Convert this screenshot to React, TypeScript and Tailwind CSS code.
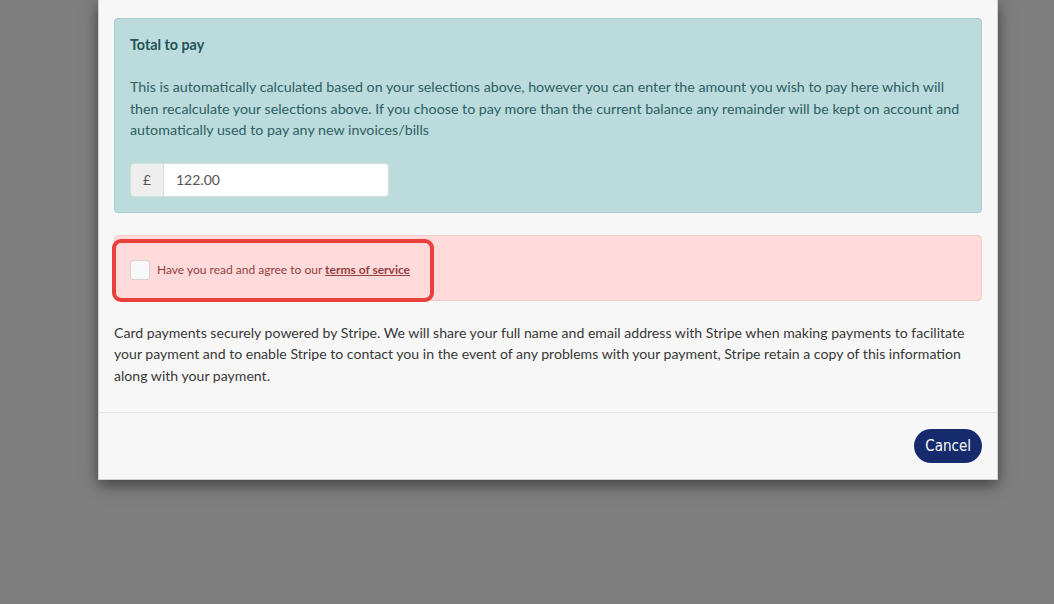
export default function App() {
  const font = { fontFamily: '"Lato", "Open Sans", sans-serif' };
  return (
    <div className="w-full h-[604px] bg-[#7f7f7f] overflow-hidden" style={font}>
      <div className="ml-[98px] w-[900px] bg-[#f7f7f7] shadow-[0_5px_15px_rgba(0,0,0,0.5)] border border-[#d0d0d0] border-t-0">
        <div className="px-[15px] pt-[18px] pb-[26px]">
          <div className="bg-[#bbdbdc] border border-[#a9cbcd] rounded-[4px] px-[15px] pt-[15px] pb-[15px] text-[#2e6062]">
            <div className="text-[14.3px] font-bold leading-[21px] text-[#245255]">Total to pay</div>
            <p className="mt-[21px] text-[14.25px] leading-[21.5px]">
              This is automatically calculated based on your selections above, however you can enter the amount you wish to pay here which will then recalculate your selections above. If you choose to pay more than the current balance any remainder will be kept on account and automatically used to pay any new invoices/bills
            </p>
            <div className="mt-[22px] flex w-[259px] h-[34px] rounded-[4px] overflow-hidden border border-[#d6dcdc]">
              <div className="w-[33px] bg-[#eeeeee] border-r border-[#d6d6d6] flex items-center justify-center text-[14px] text-[#555]">£</div>
              <div className="flex-1 bg-white flex items-center px-[12px] text-[14px] text-[#555]">122.00</div>
            </div>
          </div>
          <div className="relative mt-[22px] h-[66px] bg-[#ffdada] border border-[#f6c9c9] rounded-[4px] flex items-center px-[15px] pt-[5px]">
            <div className="w-[20px] h-[20px] bg-[#f8f8f8] border border-[#d8d0d0] rounded-[3px]" />
            <span className="ml-[7px] text-[12px] text-[#94403f]">
              Have you read and agree to our <span className="font-bold underline">terms of service</span>
            </span>
            <div className="absolute left-[-3px] top-[3px] w-[322px] h-[63px] border-[4px] border-[#e8403a] rounded-[9px]" />
          </div>
          <p className="mt-[21px] text-[14.1px] leading-[21.5px] text-[#383838]">
            Card payments securely powered by Stripe. We will share your full name and email address with Stripe when making payments to facilitate your payment and to enable Stripe to contact you in the event of any problems with your payment, Stripe retain a copy of this information along with your payment.
          </p>
        </div>
        <div className="border-t border-[#e3e3e3] px-[15px] py-[16px] flex justify-end">
          <button
            className="h-[34px] px-[11px] rounded-full bg-[#152b6c] text-white text-[15px]"
            style={{ fontFamily: '"DejaVu Sans Condensed", "DejaVu Sans", sans-serif' }}
          >
            Cancel
          </button>
        </div>
      </div>
    </div>
  );
}
